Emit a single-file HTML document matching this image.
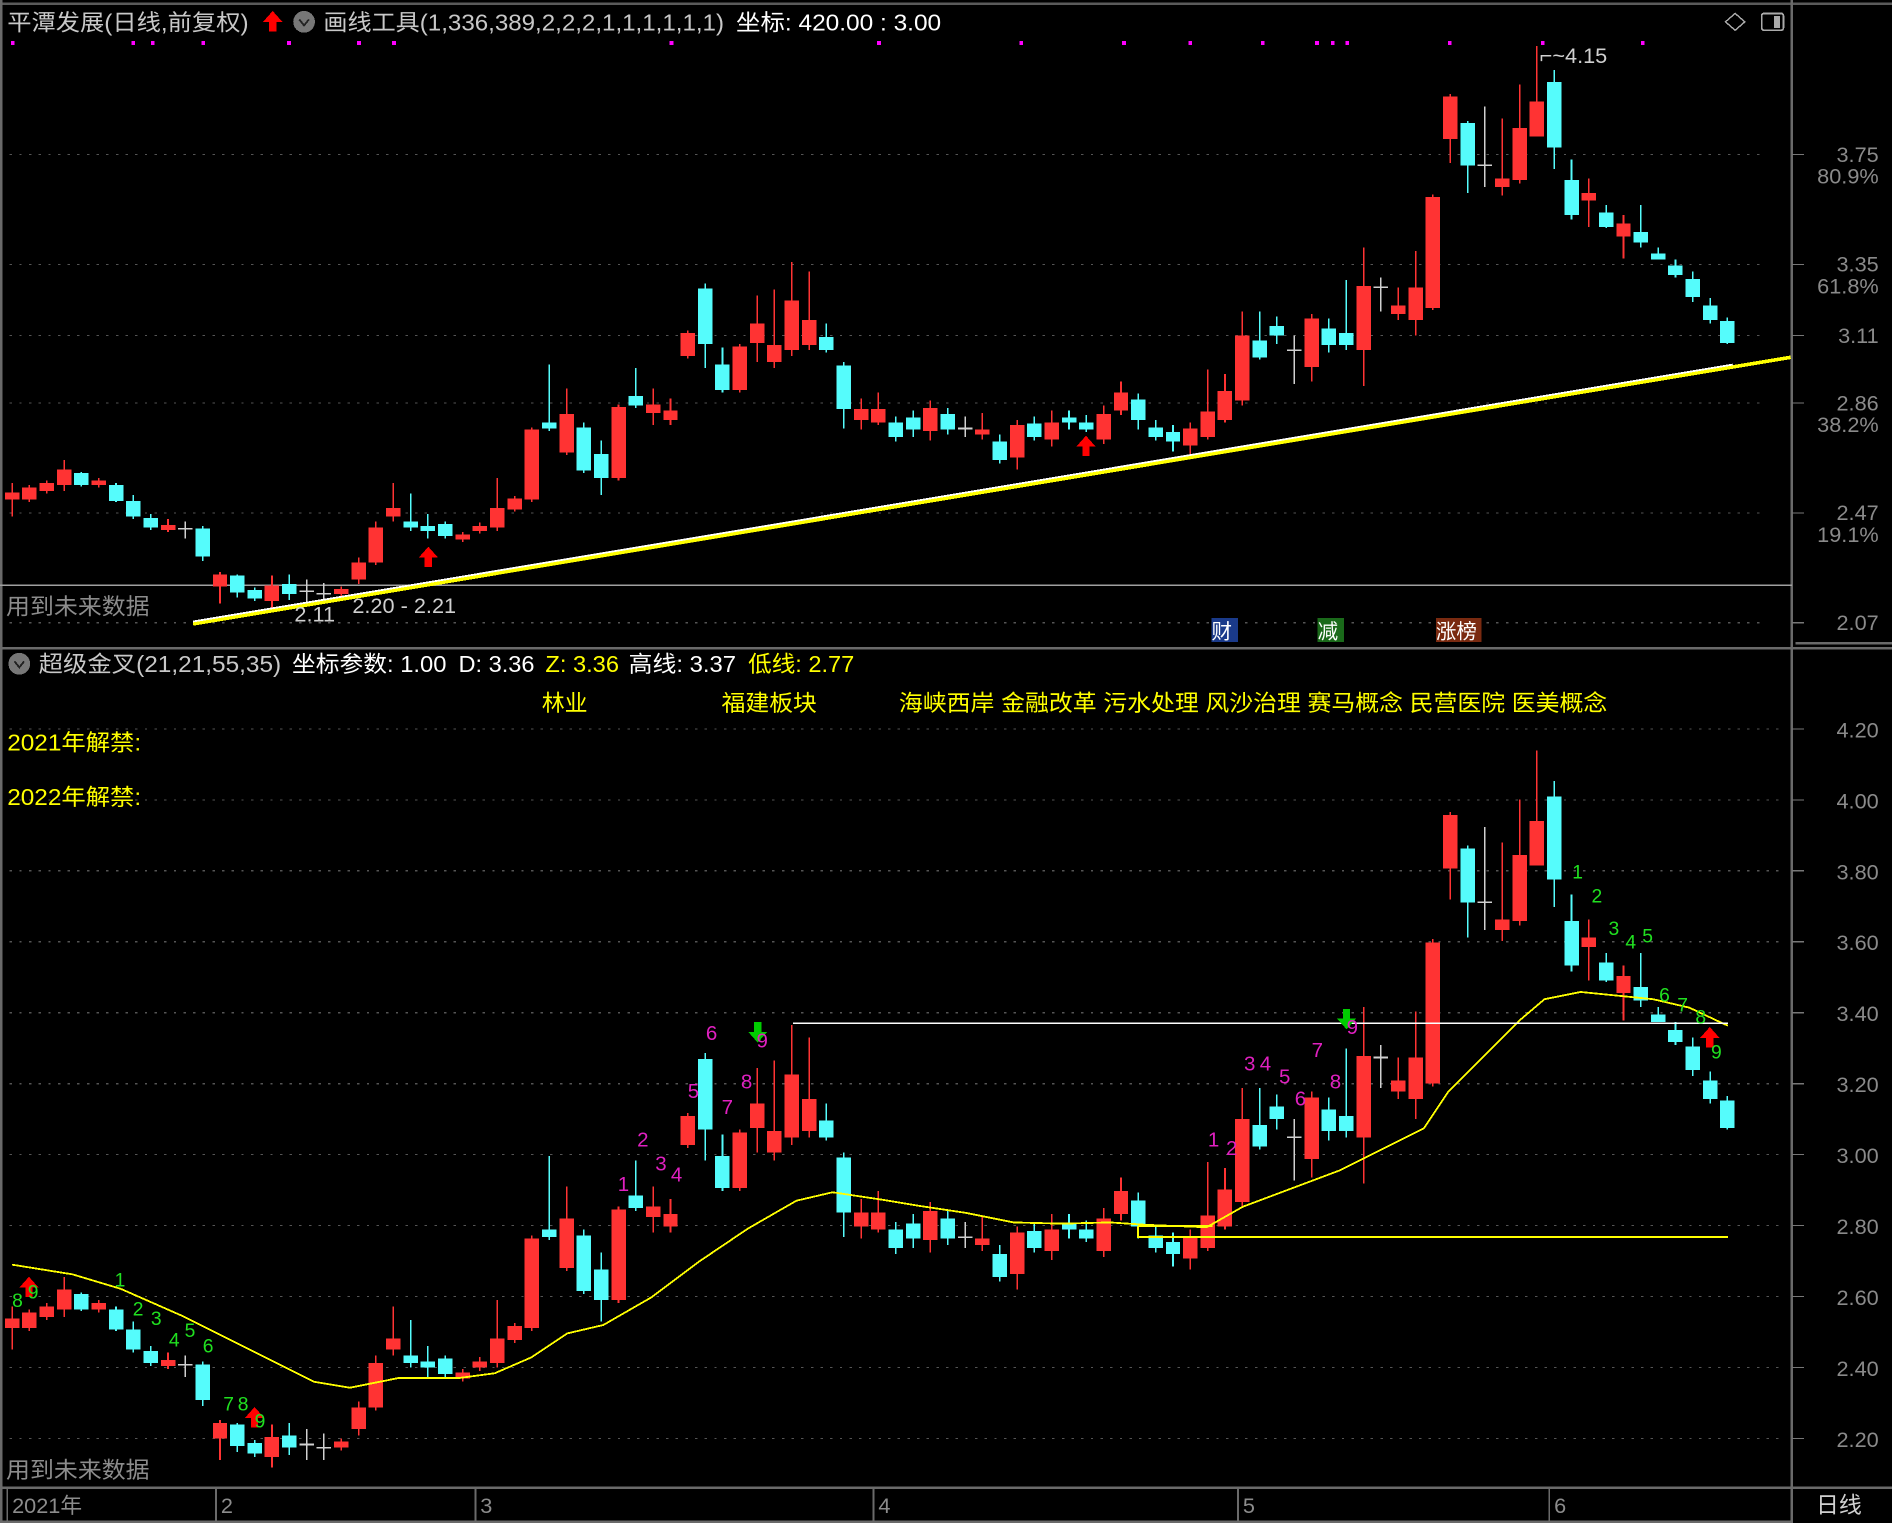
<!DOCTYPE html>
<html><head><meta charset="utf-8">
<style>
html,body{margin:0;padding:0;background:#000;overflow:hidden}
svg{display:block}
text{font-family:"Liberation Sans","Noto Sans CJK SC",sans-serif}
</style></head>
<body>
<svg id="s" width="1892" height="1523" viewBox="0 0 1568 1262" xmlns="http://www.w3.org/2000/svg" shape-rendering="crispEdges">
<rect width="1568" height="1262" fill="#000"/>
<line x1="0" y1="3" x2="1568" y2="3" stroke="#5a5a5a" stroke-width="2"/>
<line x1="1485" y1="0" x2="1485" y2="1262" stroke="#6a6a6a" stroke-width="2"/>
<line x1="1" y1="0" x2="1" y2="1262" stroke="#6a6a6a" stroke-width="2"/>
<line x1="0" y1="537" x2="1568" y2="537" stroke="#6a6a6a" stroke-width="2"/>
<line x1="1488" y1="533" x2="1568" y2="533" stroke="#6a6a6a" stroke-width="2"/>
<line x1="0" y1="1233" x2="1568" y2="1233" stroke="#6a6a6a" stroke-width="2"/>
<line x1="0" y1="1261" x2="1485" y2="1261" stroke="#6a6a6a" stroke-width="2"/>
<line x1="0" y1="485" x2="1485" y2="485" stroke="#a0a0a0" stroke-width="1.2"/>
<g id="grid"></g>
<g id="cand"></g>
<g id="over"></g>
</svg>
<script>
var NS="http://www.w3.org/2000/svg";
function el(p,t,a,txt){var e=document.createElementNS(NS,t);for(var k in a)e.setAttribute(k,a[k]);if(txt!==undefined)e.textContent=txt;p.appendChild(e);return e;}
var G=document.getElementById('grid'),C=document.getElementById('cand'),O=document.getElementById('over');
[128,219,278,334,425,516].forEach(function(y){el(G,'line',{x1:8,y1:y,x2:1460,y2:y,stroke:'#555','stroke-width':1,'stroke-dasharray':'2 6'});el(G,'line',{x1:1485,y1:y,x2:1495,y2:y,stroke:'#777'});});
var tl=[[128,'3.75','80.9%'],[219,'3.35','61.8%'],[278,'3.11',''],[334,'2.86','38.2%'],[425,'2.47','19.1%'],[516,'2.07','']];
tl.forEach(function(a){el(G,'text',{x:1557,y:a[0]+6,fill:'#8a8a8a','font-size':18,'text-anchor':'end'},a[1]);if(a[2])el(G,'text',{x:1557,y:a[0]+24,fill:'#8a8a8a','font-size':18,'text-anchor':'end'},a[2]);});
for(var p=4.2;p>2.1;p-=0.2){var y=604+(4.2-p)*294;el(G,'line',{x1:8,y1:y,x2:1480,y2:y,stroke:'#555','stroke-dasharray':'2 6'});el(G,'line',{x1:1485,y1:y,x2:1495,y2:y,stroke:'#777'});el(G,'text',{x:1557,y:y+7,fill:'#8a8a8a','font-size':18,'text-anchor':'end'},p.toFixed(2));}
var D=[['r',408,414,400,428],['r',404,414,402,416],['r',400,407,398,409],['r',389,402,381,407],['c',392,402,391,403],['r',398,402,396,404],['c',402,415,400,416],['c',415,428,410,430],['c',429,437,426,439],['r',435,439,430,441],['w',438,438,432,446],['c',438,461,436,465],['r',476,486,474,500],['c',477,491,476,495],['c',489,496,487,498],['r',485,498,477,505],['c',484,492,476,497],['w',490,490,480,500],['w',492,492,483,500],['r',488,492,486,494],['r',466,480,462,484],['r',437,466,432,468],['r',421,428,400,432],['c',432,437,409,440],['c',436,440,426,446],['c',434,444,432,446],['r',443,447,441,449],['r',436,440,433,442],['r',421,437,396,440],['r',413,422,411,424],['r',356,414,354,416],['c',350,355,302,357],['r',343,375,322,377],['c',354,390,350,392],['c',376,396,365,410],['r',337,396,335,398],['c',328,336,305,338],['r',335,342,322,352],['r',340,348,330,352],['r',276,295,274,297],['c',239,285,235,305],['c',302,323,288,325],['r',287,323,285,325],['r',268,284,245,300],['r',286,300,240,305],['r',249,290,217,295],['r',265,286,225,290],['c',279,290,268,292],['c',303,339,300,355],['r',339,348,330,356],['r',339,350,325,352],['c',350,362,345,366],['c',346,356,340,362],['r',338,357,332,365],['c',343,356,338,360],['w',355,355,345,362],['r',356,360,342,364],['c',366,381,360,384],['r',352,379,348,389],['c',351,362,345,365],['r',350,364,340,370],['c',346,350,340,356],['c',350,356,344,358],['r',343,364,336,368],['r',325,340,316,344],['c',331,348,326,356],['c',354,362,348,365],['c',358,366,352,374],['r',355,369,350,376],['r',341,362,306,364],['r',324,348,310,350],['r',278,332,258,336],['c',282,296,258,298],['c',270,278,262,285],['w',290,290,278,318],['r',264,304,260,316],['c',272,286,264,292],['c',276,286,232,290],['r',237,290,205,320],['w',238,238,230,258],['r',253,260,238,265],['r',238,265,208,278],['r',163,255,161,257],['r',80,115,78,135],['c',102,137,100,160],['w',137,137,88,155],['r',148,155,98,162],['r',106,149,70,152],['r',84,113,38,113],['c',68,122,58,140],['c',149,178,132,182],['r',160,166,148,188],['c',176,188,170,189],['r',185,196,178,214],['c',192,201,170,205],['c',210,215,205,215],['c',220,228,215,230],['c',231,246,225,250],['c',253,265,247,268],['c',266,284,263,285]];
function tb(y){return 736.3+(y-128)*1.2727;}
var col={r:'#ff3333',c:'#55fcfc',w:'#d0d0d0'};
D.forEach(function(d,i){var x=10+i*14.36;[[function(v){return v;}],[tb]].forEach(function(f){f=f[0];var c=col[d[0]];
el(C,'line',{x1:x,y1:f(d[3]),x2:x,y2:f(d[4]),stroke:c,'stroke-width':1.3});
if(d[0]=='w'){el(C,'line',{x1:x-6,y1:f(d[1]),x2:x+6,y2:f(d[1]),stroke:c,'stroke-width':1.3});}
else{var h=Math.max(3,f(d[2])-f(d[1]));el(C,'rect',{x:x-6,y:f(d[1]),width:12,height:h,fill:c});}});});
el(O,'line',{x1:160,y1:517,x2:1484,y2:296,stroke:'#ffff00','stroke-width':3});
el(O,'line',{x1:160,y1:515,x2:1436,y2:302,stroke:'#ffffff','stroke-width':1.5});
var ma=[[10,1048],[60,1056],[100,1068],[150,1090],[200,1115],[260,1145],[290,1150],[330,1142],[380,1142],[410,1138],[440,1125],[470,1105],[500,1098],[540,1075],[580,1045],[620,1018],[660,995],[690,988],[730,994],[760,999],[800,1005],[840,1013],[880,1014],[920,1013],[950,1015],[1000,1017],[1030,1000],[1070,985],[1110,970],[1150,950],[1180,935],[1200,905],[1230,875],[1260,845],[1280,828],[1310,822],[1340,825],[1370,828],[1400,835],[1432,850]];
el(O,'polyline',{points:ma.map(function(p){return p.join(',')}).join(' '),fill:'none',stroke:'#ffff00','stroke-width':1.5});
el(O,'line',{x1:657,y1:848,x2:1432,y2:848,stroke:'#fff','stroke-width':1.5});
el(O,'polyline',{points:'943,1016 943,1025 1432,1025',fill:'none',stroke:'#ffff00','stroke-width':1.5});
el(O,'line',{x1:943,y1:1016,x2:1005,y2:1016,stroke:'#ffff00','stroke-width':1.5});
function up(x,y,c){el(O,'polygon',{points:(x)+','+y+' '+(x-8)+','+(y+9)+' '+(x-3)+','+(y+9)+' '+(x-3)+','+(y+17)+' '+(x+3)+','+(y+17)+' '+(x+3)+','+(y+9)+' '+(x+8)+','+(y+9),fill:c});}
function dn(x,y,c){el(O,'polygon',{points:(x)+','+(y+17)+' '+(x-8)+','+(y+8)+' '+(x-3)+','+(y+8)+' '+(x-3)+','+y+' '+(x+3)+','+y+' '+(x+3)+','+(y+8)+' '+(x+8)+','+(y+8),fill:c});}
up(355,453,'#ff0000');up(900,361,'#ff0000');up(226,9,'#ff0000');
up(24,1058,'#ff0000');up(211,1166,'#ff0000');up(1417,851,'#ff0000');
dn(628,847,'#00cc00');dn(1116,836,'#00cc00');
[9,109,125,167,238,296,325,555,727,845,930,985,1045,1090,1103,1115,1200,1277,1360].forEach(function(x){el(O,'rect',{x:x,y:34,width:3,height:3,fill:'#ff00ff'});});
function T(x,y,s,c,t,a,L){var o={x:x,y:y,'font-size':s,fill:c,'text-anchor':a||'start'};if(L){o.textLength=L;o.lengthAdjust='spacingAndGlyphs';}el(O,'text',o,t);}
var mg='#e020c0',gr='#20e020';
[[590,862,'6'],[632,868,'9'],[575,910,'5'],[603,923,'7'],[619,902,'8'],[533,950,'2'],[548,970,'3'],[561,979,'4'],[517,987,'1'],[1036,887,'3'],[1049,887,'4'],[1065,898,'5'],[1078,916,'6'],[1092,876,'7'],[1107,902,'8'],[1121,857,'9'],[1006,950,'1'],[1021,957,'2']].forEach(function(a){T(a[0]-5,a[1],17,mg,a[2]);});
[[15,1083,'8'],[28,1076,'9'],[100,1066,'1'],[115,1090,'2'],[130,1098,'3'],[145,1116,'4'],[158,1108,'5'],[173,1121,'6'],[190,1169,'7'],[202,1169,'8'],[216,1183,'9'],[1308,728,'1'],[1324,748,'2'],[1338,775,'3'],[1352,786,'4'],[1366,781,'5'],[1380,830,'6'],[1395,838,'7'],[1410,848,'8'],[1423,877,'9']].forEach(function(a){T(a[0]-5,a[1],16,gr,a[2]);});
T(6,25,19,'#c8c8c8','平潭发展(日线,前复权)','start',200);
el(O,'circle',{cx:252,cy:18,r:9,fill:'#777'});el(O,'path',{d:'M248 16 L252 21 L256 16',stroke:'#222',fill:'none','stroke-width':1.5});
T(268,25,19,'#c8c8c8','画线工具(1,336,389,2,2,2,1,1,1,1,1,1)','start',332);
T(610,25,19,'#fff','坐标: 420.00 : 3.00','start',170);
el(O,'path',{d:'M1438 11 L1446 18 L1438 25 L1430 18 Z',stroke:'#aaa',fill:'none','stroke-width':1.2});
el(O,'rect',{x:1460,y:11,width:18,height:14,stroke:'#aaa',fill:'none','stroke-width':1.5,rx:2});el(O,'rect',{x:1470,y:13,width:5,height:10,fill:'#aaa'});
T(1276,52,18,'#d0d0d0','⌐~4.15');
T(5,509,19,'#8c8c8c','用到未来数据','start',119);
T(244,515,18,'#d0d0d0','2.11');T(292,508,18,'#d0d0d0','2.20 - 2.21');
el(O,'rect',{x:1004,y:512,width:22,height:20,fill:'#1a3a8a'});T(1004,529,17,'#fff','财');
el(O,'rect',{x:1092,y:512,width:22,height:20,fill:'#1a6a1a'});T(1092,529,17,'#fff','减');
el(O,'rect',{x:1190,y:512,width:38,height:20,fill:'#7a2a10'});T(1190,529,17,'#fff','涨榜');
el(O,'circle',{cx:16,cy:550,r:9,fill:'#777'});el(O,'path',{d:'M12 548 L16 553 L20 548',stroke:'#222',fill:'none','stroke-width':1.5});
T(32,557,19,'#c8c8c8','超级金叉(21,21,55,35)','start',201);
T(242,557,19,'#fff','坐标参数: 1.00','start',128);
T(380,557,19,'#fff','D: 3.36','start',63);
T(452,557,19,'#ffff00','Z: 3.36','start',61);T(521,557,19,'#fff','高线: 3.37','start',89);T(620,557,19,'#ffff00','低线: 2.77','start',88);
T(449,589,19,'#ffff00','林业','start',38);T(598,589,19,'#ffff00','福建板块','start',79);
T(745,589,19,'#ffff00','海峡西岸 金融改革 污水处理 风沙治理 赛马概念 民营医院 医美概念','start',587);
T(6,622,19,'#ffff00','2021年解禁:','start',111);T(6,667,19,'#ffff00','2022年解禁:','start',111);
T(5,1225,19,'#8c8c8c','用到未来数据','start',119);
[[10,'2021年'],[183,'2'],[398,'3'],[728,'4'],[1030,'5'],[1288,'6']].forEach(function(a){el(O,'line',{x1:a[0]-4,y1:1234,x2:a[0]-4,y2:1260,stroke:'#6a6a6a','stroke-width':1.5});T(a[0],1254,18,'#8c8c8c',a[1]);});
T(1505,1254,19,'#d0d0d0','日线');
</script>
</body></html>
